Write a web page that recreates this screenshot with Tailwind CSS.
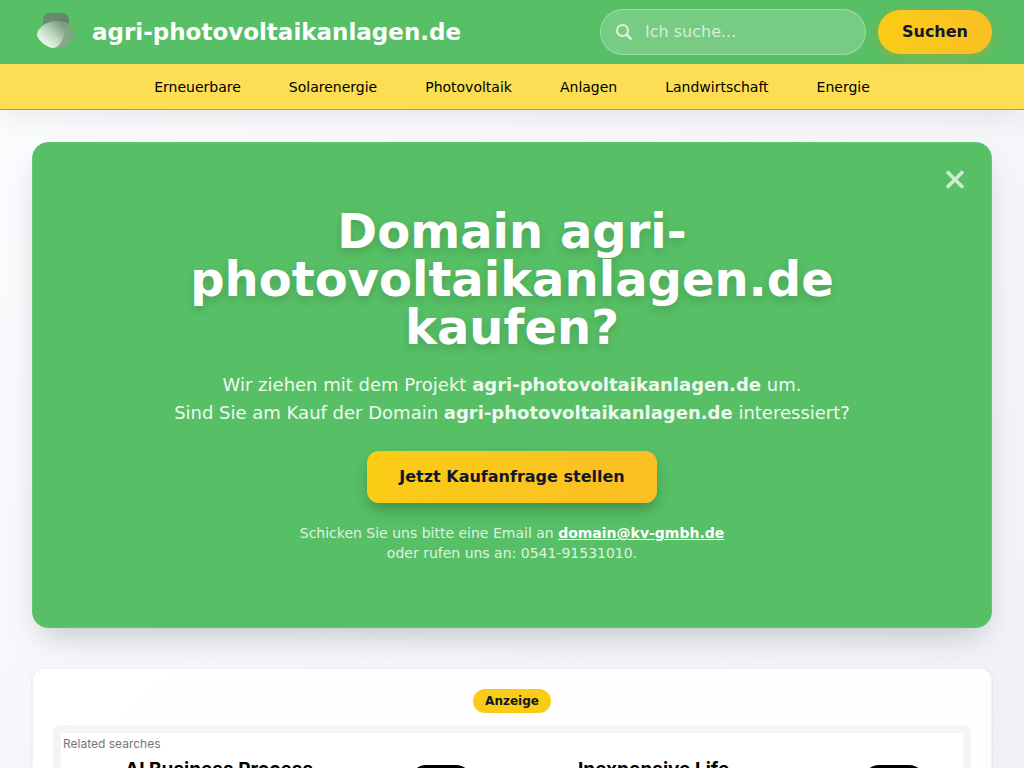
<!DOCTYPE html>
<html lang="de">
<head>
  <meta charset="UTF-8" />
  <meta name="viewport" content="width=device-width, initial-scale=1" />
  <title>agri-photovoltaikanlagen.de</title>
  <script src="https://cdn.jsdelivr.net/npm/@tailwindcss/browser@4"></script>
</head>
<body class="min-h-screen overflow-x-hidden bg-linear-to-br from-[#fbfcfe] to-[#f0f1f6] font-['DejaVu_Sans',sans-serif] text-gray-900">

  <!-- Header -->
  <header class="relative border-b border-[#58bf66] bg-[#57bf65] shadow-[0_10px_25px_-3px_rgba(0,0,0,0.08)]">
    <div class="flex h-16 items-center justify-between px-8">
      <a href="#" class="flex items-center gap-3 text-[23px] font-bold text-white">
        <svg class="size-12" viewBox="0 0 48 48" fill="none">
          <defs>
            <linearGradient id="leaf-top" x1="14" y1="6" x2="34" y2="14" gradientUnits="userSpaceOnUse">
              <stop stop-color="#6c8c70" />
              <stop offset="1" stop-color="#688069" />
            </linearGradient>
            <linearGradient id="leaf-right" x1="40" y1="16" x2="28" y2="40" gradientUnits="userSpaceOnUse">
              <stop stop-color="#72a67a" />
              <stop offset="1" stop-color="#8fa892" />
            </linearGradient>
            <linearGradient id="leaf-left" x1="10" y1="36" x2="30" y2="14" gradientUnits="userSpaceOnUse">
              <stop stop-color="#f1faf2" />
              <stop offset="0.4" stop-color="#c4dfc8" />
              <stop offset="1" stop-color="#76977b" />
            </linearGradient>
          </defs>
          <path fill="url(#leaf-top)" d="M11 14C11 8 13 5 19 5h11c5 0 7 3 7 8 0 6-3 9-9 9h-8c-6 0-9-3-9-8z" />
          <path fill="url(#leaf-right)" d="M26 15c5-3 10-1 14 5 3 5 4 8 1 12-4 5-9 8-16 8-2-8-3-20 1-25z" />
          <path fill="url(#leaf-left)" d="M5 26c1-5 6-10 13-12 8-2 15-1 15 6 0 6-2 12-6 17-3 3-6 4-10 2-6-3-12-8-12-13z" />
        </svg>
        <span>agri-photovoltaikanlagen.de</span>
      </a>
      <form class="flex items-center gap-3">
        <div class="relative">
          <label for="search" aria-label="Suche" class="absolute left-4 top-[15px]">
            <svg class="size-4 text-white/75" viewBox="0 0 16 16" fill="none" stroke="currentColor" stroke-width="2">
              <circle cx="6.500" cy="6.500" r="5.500" />
              <path d="M10.500 10.500L15.500 15.500" stroke-width="2.500" />
            </svg>
          </label>
          <input id="search" type="text" placeholder="Ich suche..." class="h-[46px] w-[266px] rounded-full border border-white/30 bg-white/20 pb-[2px] pl-11 pr-4 text-base text-white outline-none placeholder:text-white/70" />
        </div>
        <button type="submit" class="h-11 rounded-full bg-linear-to-r from-[#facc15] to-[#fbbf24] px-6 font-bold shadow-[0_4px_14px_rgba(250,150,21,0.3)]">Suchen</button>
      </form>
    </div>

    <!-- Navigation -->
    <nav class="flex h-[45px] items-center justify-center gap-12 bg-[#fbde53] text-sm text-black">
      <a href="#">Erneuerbare</a>
      <a href="#">Solarenergie</a>
      <a href="#">Photovoltaik</a>
      <a href="#">Anlagen</a>
      <a href="#">Landwirtschaft</a>
      <a href="#">Energie</a>
    </nav>
  </header>

  <main class="px-8 pt-8">

    <!-- Domain offer -->
    <section class="relative rounded-2xl border border-[#66c573] bg-[#57bf65] px-12 py-16 text-center text-white shadow-[0_16px_32px_-10px_rgba(0,0,0,0.22)]">
      <button type="button" aria-label="Schließen" class="absolute right-6 top-6 flex size-6 items-center justify-center text-white/70">
        <svg class="size-6" viewBox="0 0 24 24" fill="none" stroke="currentColor" stroke-width="3.600">
          <path d="M4 4.500L20 20.500M20 4.500L4 20.500" />
        </svg>
      </button>
      <div class="mx-auto max-w-3xl">
        <h1 class="mb-5 text-5xl/12 font-bold [text-shadow:0_4px_8px_rgba(0,0,0,0.15)]">Domain agri-photovoltaikanlagen.de kaufen?</h1>
        <p class="mb-6 text-lg/7 text-white/90">
          Wir ziehen mit dem Projekt <strong>agri-photovoltaikanlagen.de</strong> um.<br />
          Sind Sie am Kauf der Domain <strong>agri-photovoltaikanlagen.de</strong> interessiert?
        </p>
        <button type="button" class="mb-5 h-[52px] rounded-xl bg-linear-to-r from-[#facc15] to-[#fbbf24] px-8 font-bold text-gray-900 shadow-[0_8px_16px_-3px_rgba(0,0,0,0.3)]">Jetzt Kaufanfrage stellen</button>
        <p class="text-sm/5 text-white/80">
          Schicken Sie uns bitte eine Email an <a href="mailto:domain@kv-gmbh.de" class="font-bold text-white underline">domain@kv-gmbh.de</a><br />
          oder rufen uns an: 0541-91531010.
        </p>
      </div>
    </section>

    <!-- Ads -->
    <section class="mt-10 rounded-xl border border-gray-200/60 bg-white/90 p-5 shadow-sm">
      <div class="mb-3 flex justify-center">
        <span class="rounded-full bg-[#facc15] px-3 py-1 text-xs font-bold">Anzeige</span>
      </div>
      <div class="rounded-lg bg-gray-100 p-2">
        <div class="bg-white px-[2px] pt-[3px] font-[Inter,sans-serif]">
          <p class="text-xs/4 text-[#757575]">Related searches</p>
          <div class="grid grid-cols-2 gap-2 pb-10 pt-1 text-black">
            <a href="#" class="flex items-start justify-between pl-[62px] pr-9">
              <span class="text-[19px]/7 font-bold">AI Business Process</span>
              <span class="mt-[9px] h-8 w-[62px] rounded-full bg-black"></span>
            </a>
            <a href="#" class="flex items-start justify-between pl-[62px] pr-9">
              <span class="text-[19px]/7 font-bold">Inexpensive Life</span>
              <span class="mt-[9px] h-8 w-[62px] rounded-full bg-black"></span>
            </a>
          </div>
        </div>
      </div>
    </section>
  </main>

</body>
</html>
